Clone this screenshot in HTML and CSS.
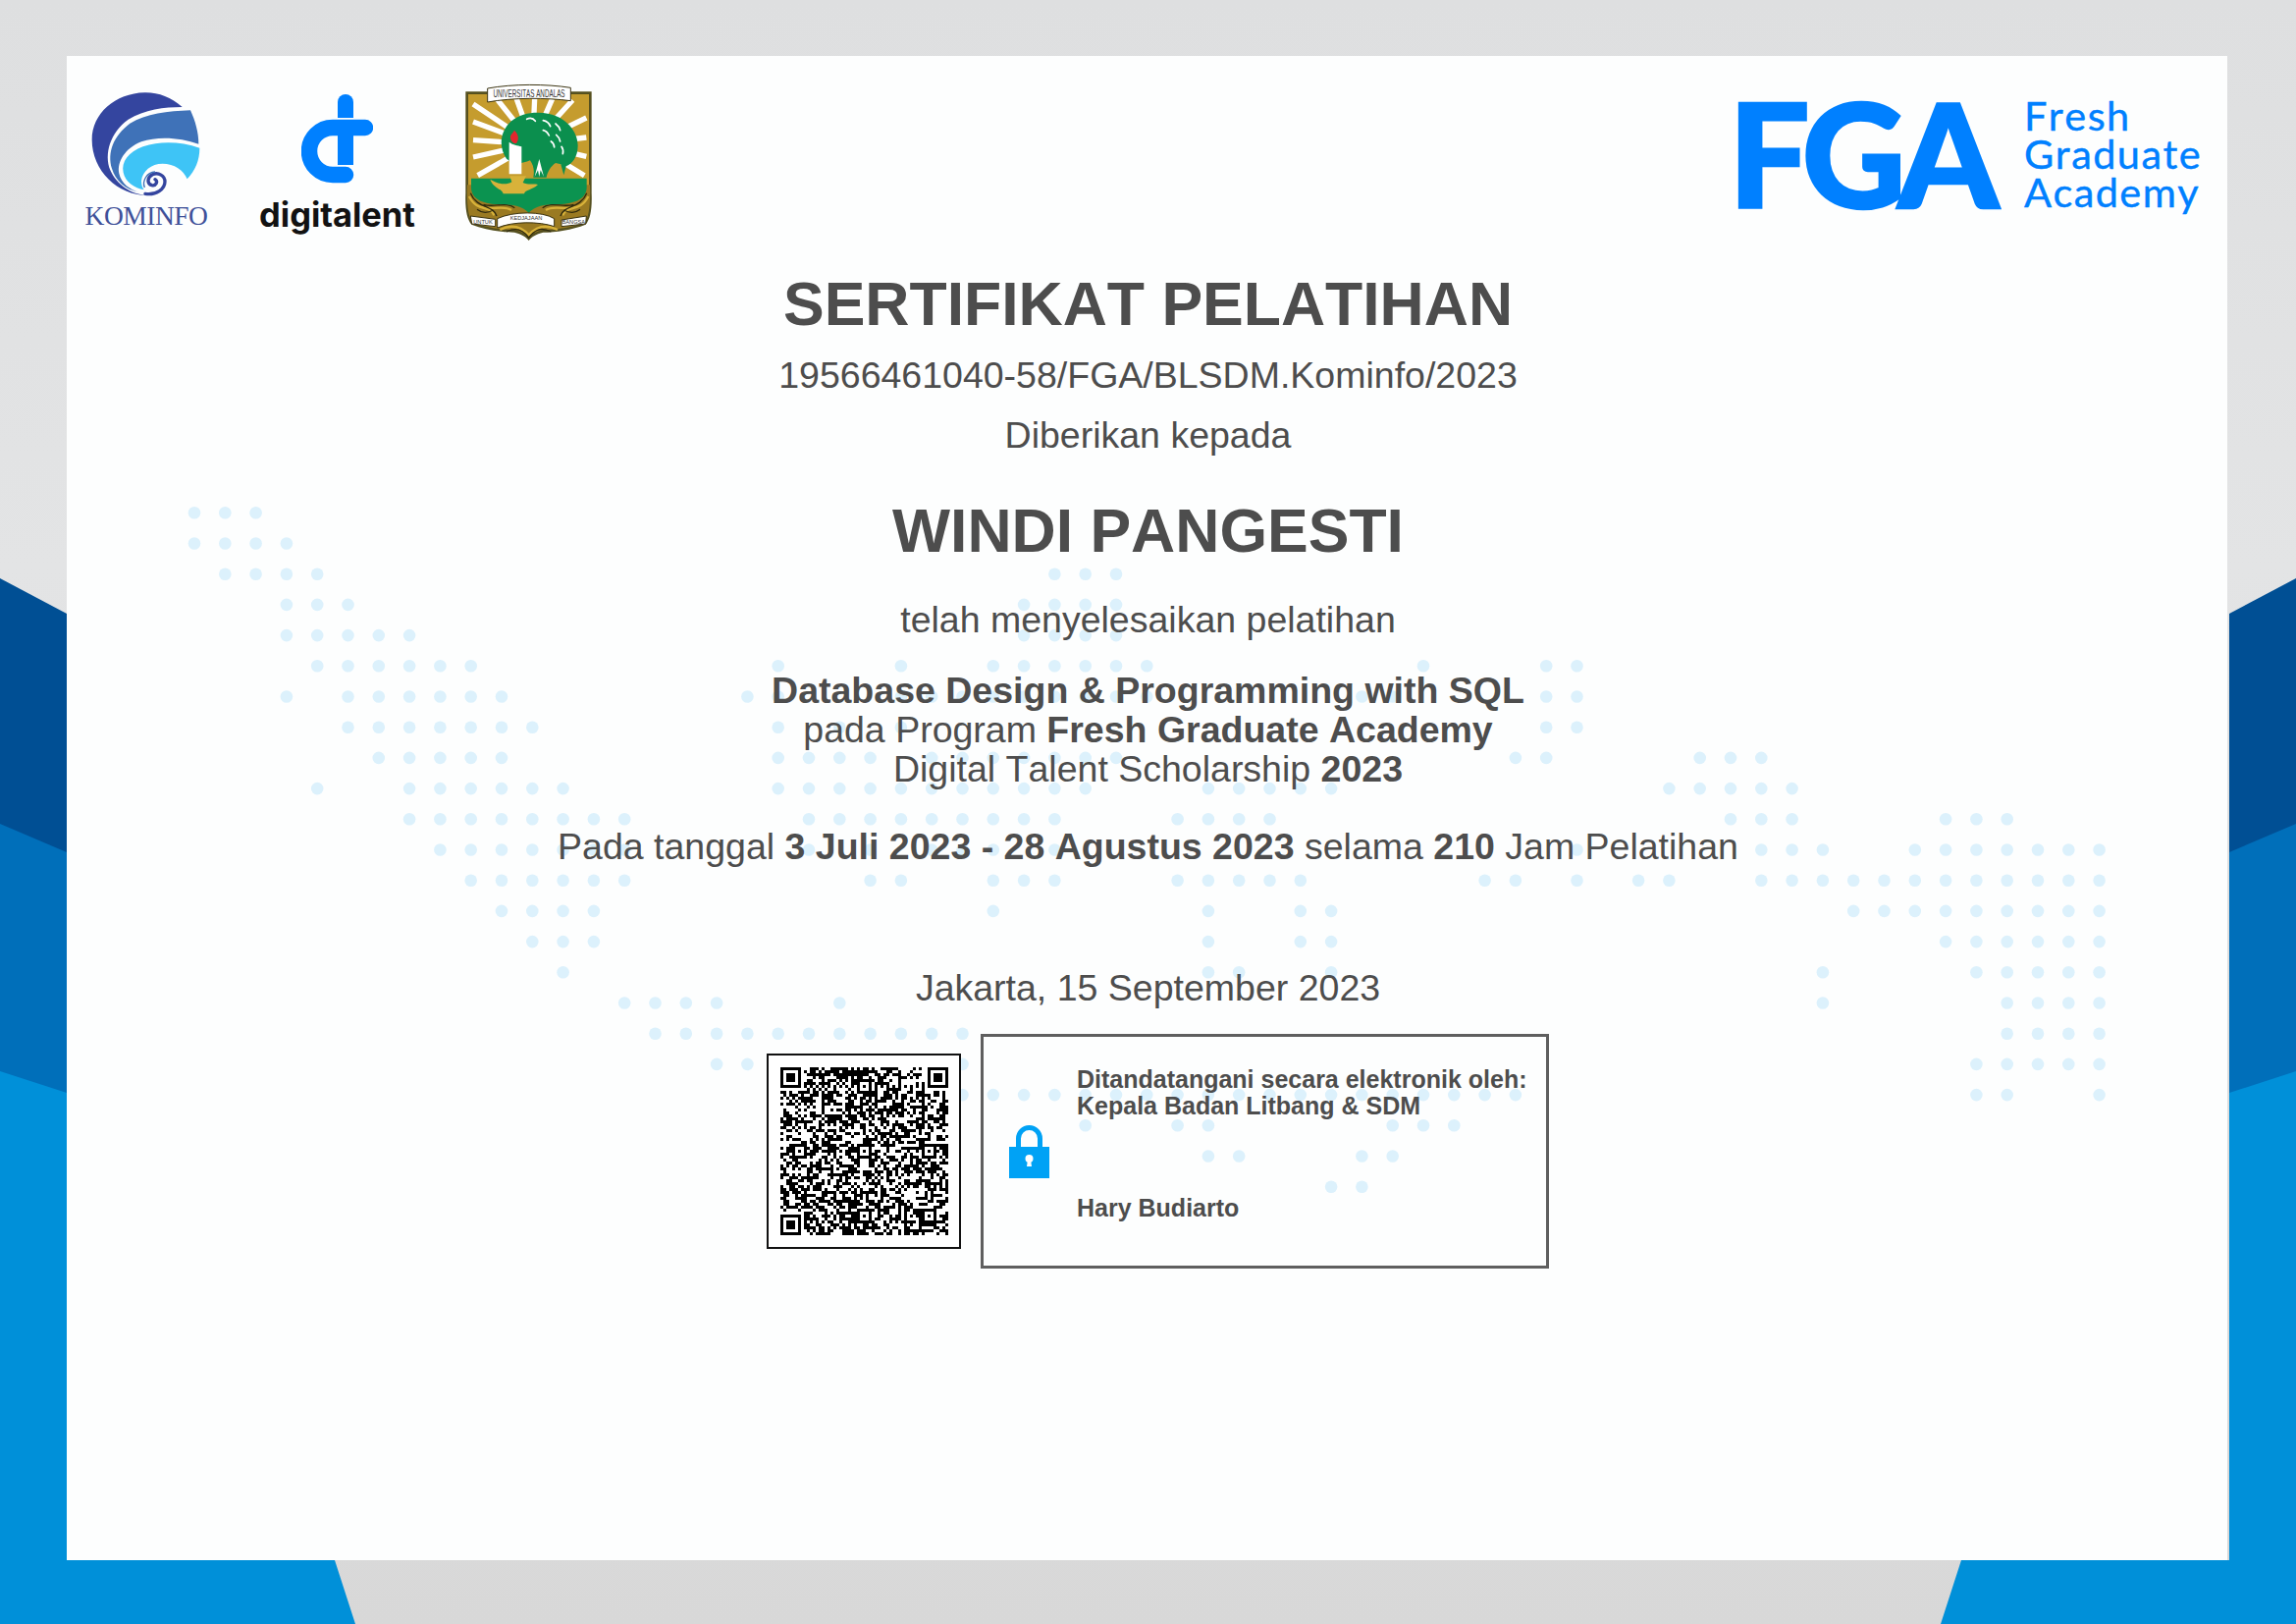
FILE: index.html
```html
<!DOCTYPE html>
<html lang="id">
<head>
    <meta charset="UTF-8">
    <title>Sertifikat Pelatihan</title>
    <link rel="stylesheet" href="styles.css">
</head>
<body>
    <svg class="bands" viewBox="0 0 2339 1654">
        <g id="band-left">
            <polygon fill="#004f94" points="0,589 68,625 68,900 0,900"/>
            <polygon fill="#006fba" points="0,839 68,868 68,1130 0,1130"/>
            <polygon fill="#0090d9" points="0,1091 68,1113 68,1589 341,1589 362,1654 0,1654"/>
        </g>
        <use href="#band-left" transform="translate(2339 0) scale(-1 1)"/>
    </svg>

    <main class="certificate">
        <svg class="dots" id="dots" viewBox="68 57 2201 1532"></svg>

        <header class="logos">
            <div class="partners">
                <figure class="kominfo">
                    <svg class="kominfo-mark" viewBox="0 0 390 345">
                        <path fill="#34459f" d="M305 72C270 42 232 27 190 28 100 30 29 92 29 172 29 268 108 342 198 342 150 340 105 310 85 265 65 215 85 150 140 110 190 80 250 72 305 72Z"/>
                        <path fill="#3f72b8" d="M330 82C345 115 355 150 355 185 300 165 230 160 180 178 130 198 105 240 112 275 118 305 145 325 175 332 130 325 100 295 90 260 75 210 95 160 145 122 195 92 260 85 330 82Z"/>
                        <path fill="#3ec4f6" d="M358 197C358 235 345 265 320 292 310 265 280 245 245 245 210 245 183 268 180 298 180 310 183 318 188 325 160 320 130 300 125 272 118 240 140 210 185 193 240 175 300 178 358 197Z"/>
                        <path fill="none" stroke="#34459f" stroke-width="10" stroke-linecap="round" d="M192 337C226 342 252 322 252 300 252 282 232 270 214 278 198 286 196 306 212 311 224 314 232 300 222 293"/>
                        <path fill="none" stroke="#3f72b8" stroke-width="4" d="M190 318C182 298 196 272 222 270"/>
                    </svg>
                    <figcaption class="kominfo-name">KOMINFO</figcaption>
                </figure>

                <figure class="digitalent">
                    <svg class="digitalent-mark" viewBox="0 0 73 91">
                        <path fill="#0080ff" d="M37 8a8 8 0 0 1 16 0V24H37Z"/>
                        <rect fill="#0080ff" x="37" y="36" width="16" height="36"/>
                        <path fill="none" stroke="#0080ff" stroke-width="16.5" stroke-linecap="round" d="M65 34H32A24 24 0 0 0 32 82H45"/>
                    </svg>
                    <figcaption class="digitalent-name">digitalent</figcaption>
                </figure>

                <svg class="unand" viewBox="0 0 435 495">
                    <path fill="#55501f" d="M25 40H410V350C412 400 406 430 392 446 350 462 300 470 262 470 240 475 226 484 218 495 210 484 196 475 174 470 136 470 86 462 43 446 29 430 23 400 25 350Z"/>
                    <path fill="#c59c2e" d="M33 48H402V340H33Z"/>
                    <g stroke="#fff" stroke-width="16" fill="none">
                        <path d="M230 200L120 62M230 200L180 60M230 200L236 60M230 200L290 62M230 200L352 66"/>
                        <path d="M230 200L48 78M230 200L48 132M230 200L48 188M230 200L48 240M230 200L62 296"/>
                        <path d="M230 200L394 120M230 200L394 180M230 200L394 238M230 200L388 296"/>
                    </g>
                    <path fill="#9a7a22" d="M30 325H405C407 385 402 425 388 440 350 455 300 462 262 462 240 467 226 476 218 486 210 476 196 467 174 462 136 462 86 455 47 440 33 425 28 385 30 325Z"/>
                    <g fill="none" stroke="#d8b23a" stroke-width="7">
                        <path d="M36 360C60 410 100 385 112 418M400 360C375 410 335 385 322 418M70 392C100 405 140 385 165 402M365 392C335 405 295 385 270 402M130 462C170 442 200 458 218 478 236 458 266 442 306 462"/>
                    </g>
                    <path fill="none" stroke="#2f2a0e" stroke-width="4" d="M40 350C60 400 110 385 120 420M395 350C375 400 325 385 315 420M80 385C110 395 150 375 175 395M355 385C325 395 285 375 260 395M150 468C185 450 205 468 218 486 232 468 250 450 286 468M60 400C75 412 95 410 110 402M375 400C360 412 340 410 325 402"/>
                    <path fill="#0b9350" d="M42 305H395V332C395 372 350 384 300 384 268 384 236 390 218 410 200 390 166 384 130 384 85 384 42 372 42 332Z"/>
                    <path fill="#0b8f4e" d="M150 245C125 210 130 160 165 130 195 105 240 100 280 108 330 118 368 160 368 205 368 240 350 262 332 268L325 295 316 262 300 258C285 268 275 285 272 302H232C236 280 232 264 222 250 195 262 170 262 150 245Z"/>
                    <path fill="#fff" d="M236 300L250 246 264 300 254 280 250 300 246 280Z"/>
                    <g fill="none" stroke="#fff" stroke-width="5" stroke-linecap="round">
                        <path d="M212 124C225 118 232 122 238 130M262 128C272 130 280 136 284 146M300 138C308 144 312 150 314 158M262 158C272 160 276 166 280 174M302 172C310 178 312 184 314 192M286 192C292 196 296 202 296 210M318 208C324 216 324 222 322 230"/>
                    </g>
                    <path fill="#fff" d="M158 194C170 204 184 204 196 208V292H158Z"/>
                    <path fill="#e3262e" d="M174 158C186 170 190 184 180 198 170 200 160 188 162 176 164 170 170 166 174 158Z"/>
                    <path fill="#d8b23a" d="M100 308C128 324 150 326 166 316L160 298H210L200 318C216 326 232 320 246 324 228 342 208 338 204 352H140C136 336 110 336 100 308Z"/>
                    <path fill="#fff" stroke="#3b3412" stroke-width="3" d="M92 30C170 16 270 16 346 28V68C270 58 170 58 92 72Z"/>
                    <text class="unand-top" transform="translate(219 58) scale(.61 1)" text-anchor="middle">UNIVERSITAS ANDALAS</text>
                    <path fill="#fff" stroke="#3b3412" stroke-width="3" d="M40 420L116 430V452L44 444ZM122 428C170 405 260 405 296 428V452C250 436 170 436 122 456ZM394 420L318 432V452L392 444Z"/>
                    <text class="unand-small" x="78" y="443" text-anchor="middle">UNTUK</text>
                    <text class="unand-small" x="210" y="432" text-anchor="middle">KEDJAJAAN</text>
                    <text class="unand-small" x="355" y="444" text-anchor="middle">BANGSA</text>
                </svg>
            </div>

            <div class="fga">
                <span class="fga-mark">FGA</span>
                <span class="fga-name">Fresh<br>Graduate<br>Academy</span>
            </div>
        </header>

        <section class="body-text">
            <h1 class="heading">SERTIFIKAT PELATIHAN</h1>
            <p class="line number">19566461040-58/FGA/BLSDM.Kominfo/2023</p>
            <p class="line given">Diberikan kepada</p>
            <h2 class="heading recipient">WINDI PANGESTI</h2>
            <p class="line done">telah menyelesaikan pelatihan</p>
            <div class="course">
                <p><b>Database Design &amp; Programming with SQL</b></p>
                <p>pada Program <b>Fresh Graduate Academy</b></p>
                <p>Digital Talent Scholarship <b>2023</b></p>
            </div>
            <p class="line dates">Pada tanggal <b>3 Juli 2023 - 28 Agustus 2023</b> selama <b>210</b> Jam Pelatihan</p>
            <p class="line place">Jakarta, 15 September 2023</p>
        </section>

        <section class="sign-row">
            <div class="qr-box">
                <svg class="qr" id="qr" viewBox="0 0 57 57" shape-rendering="crispEdges"></svg>
            </div>
            <div class="sign-box">
                <svg class="lock" viewBox="0 0 41 54">
                    <path fill="none" stroke="#00a2f5" stroke-width="5" d="M9.5 24V13.5a11 11 0 0 1 22 0V24"/>
                    <rect fill="#00a2f5" x="0" y="22" width="41" height="32"/>
                    <circle fill="#fff" cx="20.5" cy="34" r="4"/>
                    <path fill="#fff" d="M19 35h3l1 7h-5Z"/>
                </svg>
                <div class="sign-text">
                    <p>Ditandatangani secara elektronik oleh:<br>Kepala Badan Litbang &amp; SDM</p>
                    <p class="signer">Hary Budiarto</p>
                </div>
            </div>
        </section>
    </main>

    <script src="script.js"></script>
</body>
</html>
```

FILE: styles.css
```css
* {
    margin: 0;
    padding: 0;
    box-sizing: border-box;
}

body {
    position: relative;
    width: 2339px;
    height: 1654px;
    padding: 57px 70px 65px 68px;
    overflow: hidden;
    font-family: "Liberation Sans", Arial, sans-serif;
    font-kerning: none;
    color: #4d4d4d;
    background: linear-gradient(#dedfe0, #e3e4e5 35%, #d8d8d8);
}

.bands {
    position: absolute;
    top: 0;
    left: 0;
    width: 2339px;
    height: 1654px;
}

.certificate {
    position: relative;
    height: 1532px;
    background-color: #fdfefe;
}

.dots {
    position: absolute;
    top: 0;
    left: 0;
    width: 100%;
    height: 100%;
}

.dots circle {
    fill: #dcf1fc;
}

.logos,
.body-text,
.sign-row {
    position: relative;
    z-index: 1;
}

/* logo row */
.logos {
    display: flex;
    justify-content: space-between;
    height: 202px;
    padding-right: 26px;
}

.partners {
    display: flex;
    align-items: flex-start;
}

.kominfo {
    display: flex;
    flex-direction: column;
    align-items: center;
    width: 124px;
    margin: 28px 0 0 19px;
}

.kominfo-mark {
    width: 130px;
    height: 115px;
    margin-bottom: 7px;
    flex-shrink: 0;
}

.kominfo-name {
    font-family: "Liberation Serif", serif;
    font-size: 27.5px;
    line-height: 26px;
    letter-spacing: -0.5px;
    color: #3f5199;
    white-space: nowrap;
}

.digitalent {
    display: flex;
    flex-direction: column;
    align-items: center;
    width: 157px;
    margin: 39px 0 0 54px;
}

.digitalent-mark {
    width: 73px;
    height: 91px;
}

.digitalent-name {
    font-family: Inter, sans-serif;
    font-weight: 700;
    font-size: 34.5px;
    line-height: 40px;
    margin-top: 12px;
    color: #121212;
}

.unand {
    width: 145px;
    height: 165px;
    margin: 23px 0 0 44px;
}

.unand-top {
    font-family: "Liberation Sans", sans-serif;
    font-size: 31px;
    fill: #333;
}

.unand-small {
    font-family: "Liberation Sans", sans-serif;
    font-size: 17px;
    fill: #333;
}

.fga {
    display: flex;
    align-items: center;
    gap: 34px;
    height: 110px;
    margin-top: 44px;
    color: #0080ff;
}

.fga-mark {
    font-family: Lato, sans-serif;
    font-weight: 900;
    font-size: 146px;
    line-height: 110px;
    letter-spacing: -8px;
    -webkit-text-stroke: 2.5px #0080ff;
}

.fga-name {
    font-family: Lato, sans-serif;
    font-size: 41.5px;
    line-height: 39px;
    letter-spacing: 1.4px;
    -webkit-text-stroke: 0.4px #0080ff;
}

/* certificate text */
.body-text {
    padding-left: 2px;
    text-align: center;
}

.heading {
    margin-top: 12px;
    font-size: 62.5px;
    line-height: 76px;
    font-weight: 700;
}

.line {
    font-size: 37.5px;
    line-height: 44px;
}

.number {
    margin-top: 13px;
}

.given {
    margin-top: 17px;
}

.recipient {
    margin-top: 37px;
}

.done {
    margin-top: 31px;
}

.course {
    margin-top: 30px;
    font-size: 37.5px;
    line-height: 40px;
}

.dates {
    margin-top: 37px;
}

.place {
    margin-top: 100px;
}

/* signature */
.sign-row {
    display: flex;
    align-items: center;
    gap: 20px;
    margin-top: 25px;
    padding-left: 713px;
}

.qr-box {
    display: flex;
    align-items: center;
    justify-content: center;
    width: 198px;
    height: 199px;
    border: 2px solid #111;
    background-color: #fff;
}

.qr {
    width: 171px;
    height: 171px;
}

.sign-box {
    display: flex;
    align-items: center;
    gap: 28px;
    width: 579px;
    height: 239px;
    padding-left: 26px;
    border: 3px solid #5f5f5f;
}

.lock {
    width: 41px;
    height: 54px;
    flex-shrink: 0;
}

.sign-text {
    align-self: flex-start;
    padding-top: 30px;
    font-size: 25px;
    line-height: 27px;
    font-weight: 700;
}

.signer {
    margin-top: 77px;
}
```

FILE: script.js
```js
// background map, rows of [from, to] column ranges
const DOT_ROWS = [
    [[0, 2]],
    [[0, 3]],
    [[1, 4], [28, 30]],
    [[3, 5], [27, 30]],
    [[3, 7], [27, 30]],
    [[4, 9], [19, 19], [23, 23], [26, 31], [40, 40], [44, 45]],
    [[3, 3], [5, 10], [18, 19], [23, 31], [38, 39], [44, 45]],
    [[5, 11], [19, 19], [21, 21], [23, 23], [44, 45]],
    [[6, 10], [19, 22], [24, 30], [43, 44], [49, 51]],
    [[4, 4], [7, 12], [19, 29], [33, 37], [48, 52]],
    [[7, 14], [20, 28], [32, 35], [50, 52], [57, 59]],
    [[8, 14], [20, 20], [22, 22], [24, 26], [28, 28], [45, 45], [51, 53], [56, 62]],
    [[9, 14], [22, 23], [26, 28], [32, 36], [42, 43], [45, 45], [47, 48], [51, 62]],
    [[10, 13], [26, 26], [33, 33], [36, 37], [54, 62]],
    [[11, 13], [33, 33], [36, 37], [57, 62]],
    [[12, 12], [33, 34], [37, 37], [53, 53], [58, 62]],
    [[14, 17], [21, 21], [53, 53], [59, 62]],
    [[15, 25], [59, 62]],
    [[17, 18], [25, 25], [58, 62]],
    [[25, 43], [58, 59], [62, 62]],
    [[29, 29], [32, 33], [39, 41]],
    [[33, 34], [38, 39]],
    [[37, 38]]
];

const SVG_NS = "http://www.w3.org/2000/svg";

function drawDots() {
    const svg = document.querySelector("#dots");
    DOT_ROWS.forEach((ranges, row) => {
        ranges.forEach(([from, to]) => {
            for (let col = from; col <= to; col++) {
                const dot = document.createElementNS(SVG_NS, "circle");
                dot.setAttribute("cx", 198 + col * 31.3);
                dot.setAttribute("cy", 522.3 + row * 31.2);
                dot.setAttribute("r", 6.3);
                svg.appendChild(dot);
            }
        });
    });
}

// version 10 layout, 57 modules. Data area is only a filler pattern.
function drawQr() {
    const size = 57;
    const grid = [];
    let seed = 19566461;
    for (let y = 0; y < size; y++) {
        grid.push([]);
        for (let x = 0; x < size; x++) {
            seed = (seed * 69069 + 12345) % 4294967296;
            grid[y].push(seed / 4294967296 < 0.52);
        }
    }

    function finder(px, py) {
        for (let y = -1; y <= 7; y++) {
            for (let x = -1; x <= 7; x++) {
                if (px + x < 0 || py + y < 0 || px + x >= size || py + y >= size) continue;
                const edge = x === -1 || y === -1 || x === 7 || y === 7;
                const ring = x === 0 || y === 0 || x === 6 || y === 6;
                const mid = x >= 2 && x <= 4 && y >= 2 && y <= 4;
                grid[py + y][px + x] = !edge && (ring || mid);
            }
        }
    }

    function alignment(cx, cy) {
        for (let y = -2; y <= 2; y++) {
            for (let x = -2; x <= 2; x++) {
                grid[cy + y][cx + x] = Math.max(Math.abs(x), Math.abs(y)) !== 1;
            }
        }
    }

    for (let i = 8; i < size - 8; i++) {
        grid[6][i] = i % 2 === 0;
        grid[i][6] = i % 2 === 0;
    }
    [[6, 28], [28, 6], [28, 28], [28, 50], [50, 28], [50, 50]].forEach(([cx, cy]) => {
        alignment(cx, cy);
    });
    finder(0, 0);
    finder(50, 0);
    finder(0, 50);

    let d = "";
    grid.forEach((cells, y) => {
        cells.forEach((on, x) => {
            if (on) d += "M" + x + " " + y + "h1v1h-1z";
        });
    });
    const path = document.createElementNS(SVG_NS, "path");
    path.setAttribute("d", d);
    path.setAttribute("fill", "#000");
    document.querySelector("#qr").appendChild(path);
}

drawDots();
drawQr();
```
